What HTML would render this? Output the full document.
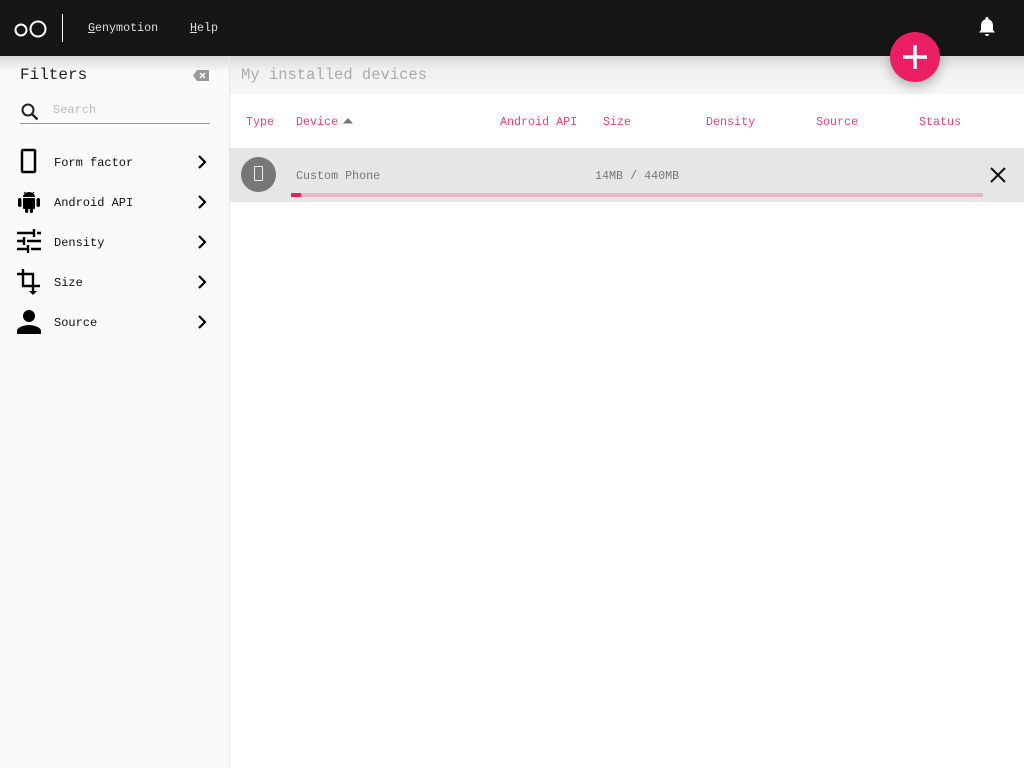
<!DOCTYPE html>
<html><head><meta charset="utf-8"><style>
*{box-sizing:border-box;margin:0;padding:0}
body{width:1024px;height:768px;overflow:hidden;background:#fff;font-family:"Liberation Mono","Noto Serif CJK SC",monospace;font-size:11.7px;position:relative}
.top{position:absolute;left:0;top:0;width:1024px;height:56px;background:#161616;z-index:3}
.top .sep{position:absolute;left:62px;top:14px;width:1px;height:28px;background:#fff}
.top .nav{position:absolute;top:21px;color:#ddd;font-size:11.7px}
.side{position:absolute;left:0;top:56px;width:230px;height:712px;background:#fafafa;border-right:1px solid #e8e8e8}
.hdr{background:linear-gradient(#d8d8d8,#f1f1f1 14px,#f6f6f6)}
.side .shadow{background:linear-gradient(#d8d8d8,#fafafa 16px)}
.side h2{position:absolute;left:20px;top:10px;font-weight:normal;font-size:16px;color:#222}
.srch{position:absolute;left:20px;top:44px;width:190px;height:24px;border-bottom:1px solid #999}
.srch span{position:absolute;left:33px;top:3px;color:#bbb;font-size:12px}
.item{position:absolute;left:0;width:230px;height:40px}
.item .lbl{position:absolute;left:54px;top:14px;color:#111;font-size:12px}
.item svg.ic{position:absolute;left:16px;top:6px}
.item svg.ch{position:absolute;left:195px;top:11px}
.hdr{position:absolute;left:230px;top:56px;width:794px;height:38px}
.hdr span{position:absolute;left:11px;top:10px;color:#aaa;font-size:15.5px}
.th{position:absolute;top:115px;color:#e91e63;font-size:11.7px;opacity:.85}
.row{position:absolute;left:230px;top:148px;width:794px;height:54px;background:#e6e6e6}
.fab{position:absolute;left:890px;top:32px;width:50px;height:50px;border-radius:50%;background:#e91e63;box-shadow:0 4px 12px rgba(0,0,0,.3);z-index:4}
</style></head><body>
<div class="top">
<svg style="position:absolute;left:14px;top:19px" width="34" height="20"><circle cx="7" cy="11" r="5.5" stroke="#fff" stroke-width="2" fill="none"/><circle cx="24" cy="10" r="7.5" stroke="#fff" stroke-width="2" fill="none"/></svg>
<div class="sep"></div>
<div class="nav" style="left:88px"><u>G</u>enymotion</div>
<div class="nav" style="left:190px"><u>H</u>elp</div>
<svg style="position:absolute;left:977px;top:16px" width="20" height="22" viewBox="0 0 20 22"><path d="M10 1a1.5 1.5 0 0 1 1.5 1.5v.7A6 6 0 0 1 16 9v5l2 2.5H2L4 14V9a6 6 0 0 1 4.5-5.8v-.7A1.5 1.5 0 0 1 10 1zM8 18h4a2 2 0 0 1-4 0z" fill="#fff"/></svg>
</div>
<div class="fab"><svg width="50" height="50"><path d="M25 13v24M13 25h24" stroke="#fff" stroke-width="3.5"/></svg></div>
<div class="side">
<div class="shadow" style="position:absolute;left:0;top:0;width:229px;height:20px"></div>
<h2>Filters</h2>
<svg style="position:absolute;left:193px;top:14px" width="16" height="11"><path d="M4 0h12v11H4L0 5.5z" fill="#999"/><path d="M7 3l5 5M12 3l-5 5" stroke="#fff" stroke-width="1.5"/></svg>
<div class="srch"><svg width="20" height="20" style="position:absolute;left:0;top:2px"><circle cx="8" cy="8" r="5.5" stroke="#222" stroke-width="2" fill="none"/><path d="M12 12l5.5 5.5" stroke="#222" stroke-width="2.4"/></svg><span>Search</span></div>
</div>
<div class="item" style="top:142px"><svg class="ic" width="26" height="26"><rect x="6" y="2" width="13" height="22" rx="1" fill="none" stroke="#000" stroke-width="2.5"/></svg><span class="lbl">Form factor</span><svg class="ch" width="14" height="18"><path d="M4 3l6 6-6 6" stroke="#000" stroke-width="2.2" fill="none"/></svg></div>
<div class="item" style="top:182px"><svg class="ic" width="26" height="28"><path d="M7 9a6 5 0 0 1 12 0z" fill="#000"/><path d="M8 4l2 2M18 4l-2 2" stroke="#000" stroke-width="1"/><rect x="7" y="10" width="12" height="11" rx="1" fill="#000"/><rect x="2" y="10" width="3.5" height="9" rx="1.7" fill="#000"/><rect x="20.5" y="10" width="3.5" height="9" rx="1.7" fill="#000"/><rect x="9" y="19" width="3.2" height="6" rx="1.6" fill="#000"/><rect x="13.8" y="19" width="3.2" height="6" rx="1.6" fill="#000"/></svg><span class="lbl">Android API</span><svg class="ch" width="14" height="18"><path d="M4 3l6 6-6 6" stroke="#000" stroke-width="2.2" fill="none"/></svg></div>
<div class="item" style="top:222px"><svg class="ic" width="26" height="28"><path d="M1 5h16M21 5h4M1 13h6M11 13h14M1 21h10M15 21h10M18 1v8M8 9v8M12 17v8" stroke="#000" stroke-width="2.4"/></svg><span class="lbl">Density</span><svg class="ch" width="14" height="18"><path d="M4 3l6 6-6 6" stroke="#000" stroke-width="2.2" fill="none"/></svg></div>
<div class="item" style="top:262px"><svg class="ic" width="26" height="28"><path d="M7 1v17h17M1 6h16v18" stroke="#000" stroke-width="2.4" fill="none"/><path d="M13 23l4 4 4-4z" fill="#000"/></svg><span class="lbl">Size</span><svg class="ch" width="14" height="18"><path d="M4 3l6 6-6 6" stroke="#000" stroke-width="2.2" fill="none"/></svg></div>
<div class="item" style="top:302px"><svg class="ic" width="26" height="28"><circle cx="13" cy="8" r="6" fill="#000"/><path d="M1 26v-3c0-4 8-6 12-6s12 2 12 6v3z" fill="#000"/></svg><span class="lbl">Source</span><svg class="ch" width="14" height="18"><path d="M4 3l6 6-6 6" stroke="#000" stroke-width="2.2" fill="none"/></svg></div>
<div class="hdr"><span>My installed devices</span></div>
<div class="th" style="left:246px">Type</div>
<div class="th" style="left:296px">Device</div>
<svg style="position:absolute;left:343px;top:118px" width="10" height="6"><path d="M0 5.5L5 0l5 5.5z" fill="#777"/></svg>
<div class="th" style="left:500px">Android API</div>
<div class="th" style="left:603px">Size</div>
<div class="th" style="left:706px">Density</div>
<div class="th" style="left:816px">Source</div>
<div class="th" style="left:919px">Status</div>
<div class="row">
<div style="position:absolute;left:11px;top:9px;width:35px;height:35px;border-radius:50%;background:#777"></div>
<div style="position:absolute;left:24px;top:18px;width:9px;height:15px;border:1.5px solid #eee;border-radius:1px"></div>
<div style="position:absolute;left:66px;top:21px;color:#777;font-size:11.7px">Custom Phone</div>
<div style="position:absolute;left:365px;top:21px;color:#777;font-size:11.7px">14MB / 440MB</div>
<div style="position:absolute;left:61px;top:45px;width:692px;height:4px;background:#ebb5c8"></div>
<div style="position:absolute;left:61px;top:45px;width:10px;height:4px;background:#e91e63"></div>
<svg style="position:absolute;left:760px;top:19px" width="16" height="16"><path d="M1 1l14 14M15 1L1 15" stroke="#111" stroke-width="2"/></svg>
</div>
</body></html>
